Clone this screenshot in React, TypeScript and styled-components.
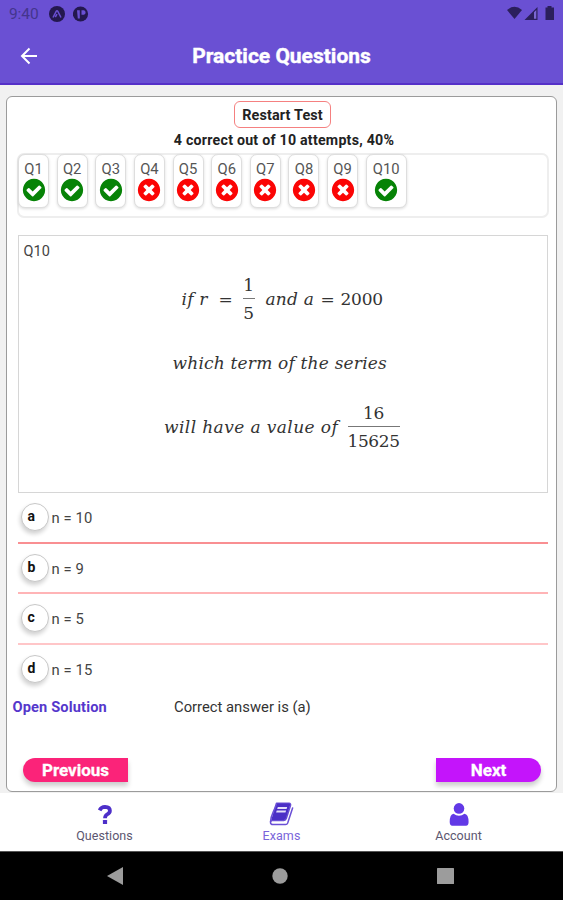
import React from "react";
import styled, { createGlobalStyle } from "styled-components";

const GlobalStyle = createGlobalStyle`
  * { box-sizing: border-box; }
  body { margin: 0; background: #f0f0f0; }
  button { border: 0; padding: 0; background: none; font: inherit; }
`;

const Screen = styled.div`
  width: 563px;
  height: 900px;
  display: flex;
  flex-direction: column;
  overflow: hidden;
  background: #f1f1f1;
  font-family: Roboto, sans-serif;
  color: #333;
  white-space: nowrap;
`;

const Header = styled.header`
  height: 85px;
  flex: none;
  background: #6a50d3;
  border-bottom: 2px solid #5530c8;
`;

const StatusBar = styled.div`
  height: 27px;
  display: flex;
  align-items: center;
  justify-content: space-between;
  padding: 0 8px 0 9px;
`;

const StatusGroup = styled.div`
  display: flex;
  align-items: center;
  gap: 8px;
`;

const Clock = styled.span`
  width: 32px;
  font-size: 15.5px;
  letter-spacing: -0.1px;
  color: #44358d;
`;

const TitleBar = styled.div`
  height: 58px;
  display: grid;
  grid-template-columns: 60px 1fr 60px;
  align-items: center;
`;

const BackButton = styled.button`
  display: flex;
  padding-left: 20px;
`;

const Title = styled.h1`
  margin: 0;
  text-align: center;
  font-size: 21px;
  line-height: 24px;
  font-weight: 700;
  color: #fff;
  -webkit-text-stroke: 0.4px #fff;
`;

const Card = styled.main`
  width: 551px;
  height: 696px;
  flex: none;
  margin: 11px 0 0 6px;
  border: 1.5px solid #9b9b9b;
  border-radius: 6px;
  background: #fff;
  display: flex;
  flex-direction: column;
`;

const Summary = styled.section`
  height: 56px;
  display: flex;
  flex-direction: column;
  align-items: center;
  padding-top: 4px;
`;

const RestartButton = styled.button`
  width: 97px;
  height: 27px;
  margin-left: 2px;
  border: 1.5px solid #f58080;
  border-radius: 6px;
  font-size: 14.4px;
  font-weight: 700;
  line-height: 27px;
  letter-spacing: 0.15px;
  color: #222;
`;

const Score = styled.p`
  margin: 4px 0 0 5px;
  font-size: 14.2px;
  line-height: 17px;
  font-weight: 700;
  letter-spacing: 0.24px;
  color: #222;
`;

const Strip = styled.div`
  width: 532px;
  height: 65px;
  margin-left: 10px;
  border: 2px solid #eee;
  border-radius: 7px;
  display: flex;
  align-items: flex-start;
  gap: 7.65px;
`;

const Chip = styled.div<{ $wide?: boolean }>`
  width: ${(p) => (p.$wide ? 41 : 31)}px;
  height: 54px;
  flex: none;
  margin-top: -1px;
  padding-top: 5.5px;
  border: 1.5px solid #dedede;
  border-radius: 7px;
  background: #fff;
  box-shadow: 0 1px 3px rgba(0, 0, 0, 0.14);
  display: flex;
  flex-direction: column;
  align-items: center;
  font-size: 14.8px;
  line-height: 16px;
  color: #555;

  &:first-child {
    margin-left: -1px;
  }
`;

const QuestionBox = styled.section`
  width: 530px;
  height: 258px;
  margin: 17px 0 0 10.5px;
  border: 1.5px solid #d6d6d6;
  display: flex;
  flex-direction: column;
`;

const QuestionLabel = styled.div`
  height: 31px;
  padding: 7px 0 0 5px;
  font-size: 14.5px;
  line-height: 17px;
  color: #444;
`;

const Formula = styled.div<{ $left: number }>`
  height: 64px;
  padding-left: ${(p) => p.$left}px;
  display: flex;
  align-items: center;
  font-family: "DejaVu Serif", serif;
  font-size: 17px;
  line-height: 20px;
  color: #333;
`;

const Words = styled.span<{ $width: number; $spacing?: number }>`
  width: ${(p) => p.$width}px;
  font-style: italic;
  letter-spacing: ${(p) => p.$spacing ?? 0.2}px;
`;

const Upright = styled.span<{ $width: number }>`
  width: ${(p) => p.$width}px;
  letter-spacing: -0.2px;
`;

const Fraction = styled.span<{ $width: number; $after?: number }>`
  width: ${(p) => p.$width}px;
  margin-right: ${(p) => p.$after ?? 0}px;
  display: flex;
  flex-direction: column;
  text-align: center;
  letter-spacing: -0.4px;
`;

const Numerator = styled.span`
  height: 24px;
  border-bottom: 1.5px solid #777;
`;

const Denominator = styled.span`
  height: 24px;
  padding-top: 4px;
`;

const Options = styled.ul`
  width: 530px;
  margin: 0 0 0 10.5px;
  padding: 0;
  list-style: none;
`;

const Option = styled.li<{ $rule: string }>`
  height: 50.7px;
  display: flex;
  align-items: center;
  gap: 3px;
  padding-left: 3px;
  border-bottom: 2px solid ${(p) => p.$rule};
  font-size: 14.8px;
  color: #444;
`;

const OptionKey = styled.span`
  width: 28px;
  height: 28px;
  margin-top: -1px;
  border: 1.5px solid #c8c8c8;
  border-radius: 50%;
  background: #fff;
  box-shadow: -1px 3px 4px rgba(0, 0, 0, 0.18);
  padding-left: 6px;
  font-size: 14px;
  line-height: 25px;
  font-weight: 700;
  color: #111;
`;

const OptionText = styled.span`
  padding-top: 1px;
  letter-spacing: 0.1px;
`;

const SolutionRow = styled.div`
  height: 30px;
  display: grid;
  grid-template-columns: 161.5px 1fr;
  align-items: center;
  margin-top: -4px;
  padding-left: 5.5px;
  font-size: 14.8px;
`;

const SolutionLink = styled.a`
  font-weight: 700;
  font-size: 14.6px;
  letter-spacing: 0.15px;
  color: #5537cc;
`;

const Pager = styled.div`
  display: flex;
  justify-content: space-between;
  margin-top: 36px;
  padding: 0 15px 0 16px;
`;

const PagerButton = styled.button<{ $side: "left" | "right" }>`
  width: 105px;
  height: 24px;
  border-radius: ${(p) => (p.$side === "left" ? "12px 0 0 12px" : "0 12px 12px 0")};
  background: ${(p) => (p.$side === "left" ? "#fb2379" : "#c414fb")};
  box-shadow: 0 4px 5px rgba(0, 0, 0, 0.2);
  color: #fff;
  font-size: 17px;
  line-height: 25px;
  font-weight: 700;
  -webkit-text-stroke: 0.3px #fff;
`;

const TabBar = styled.nav`
  height: 58px;
  margin-top: 1px;
  flex: none;
  padding: 0 16px;
  display: grid;
  grid-template-columns: repeat(3, 1fr);
  background: #fff;
`;

const Tab = styled.a<{ $active?: boolean }>`
  display: flex;
  flex-direction: column;
  align-items: center;
  padding-top: 8px;
  font-size: 12.5px;
  line-height: 16px;
  letter-spacing: 0.05px;
  color: ${(p) => (p.$active ? "#7a64da" : "#5c5670")};
`;

const SystemBar = styled.div`
  height: 49px;
  flex: none;
  padding: 0 29px 0 28px;
  display: grid;
  grid-template-columns: 175px 1fr 177px;
  place-items: center;
  background: #000;
  border-top: 1px solid #555;
`;

const circle =
  "q0 209-103 385.5t-279.5 279.5-385.5 103-385.5-103-279.5-279.5-103-385.5 103-385.5 279.5-279.5 385.5-103 385.5 103 279.5 279.5 103 385.5z";

const check =
  "M1412 734q0-28-18-46l-91-90q-19-19-45-19t-45 19l-408 407-226-226q-19-19-45-19t-45 19l-91 90q-18 18-18 46 0 27 18 45l362 362q19 19 45 19 27 0 46-19l543-543q18-18 18-45zm252 162" +
  circle;

const cross =
  "M1277 1122q0-26-19-45l-181-181 181-181q19-19 19-45 0-27-19-46l-90-90q-19-19-46-19-26 0-45 19l-181 181-181-181q-19-19-45-19-27 0-46 19l-90 90q-19 19-19 46 0 26 19 45l181 181-181 181q-19 19-19 45 0 27 19 46l90 90q19 19 46 19 26 0 45-19l181-181 181 181q19 19 45 19 27 0 46-19l90-90q19-19 19-46zm387-226" +
  circle;

function ResultIcon({ ok }: { ok: boolean }) {
  return (
    <svg width="26" height="26" viewBox="0 0 1792 1792" fill={ok ? "#078307" : "#fb0505"}>
      <path d={ok ? check : cross} />
    </svg>
  );
}

function QuestionIcon() {
  return (
    <svg width="27" height="27" viewBox="0 0 27 27">
      <path
        d="M8.600 9.300Q10.200 6 14 5.900q5 .2 4.900 3.900 0 2.300-2.700 3.600-2.100 1.100-2.200 3.900"
        fill="none"
        stroke="#4d2fc9"
        strokeWidth="3.800"
      />
      <rect x="11.900" y="18.900" width="4.200" height="4" rx="0.500" fill="#4d2fc9" />
    </svg>
  );
}

function BookIcon() {
  return (
    <svg width="27" height="27" viewBox="0 0 27 27">
      <path
        d="M8.500 2.200H21q2 .2 1.500 2.300L18.300 17.500q-.6 1.800-2.500 1.900H4q-1.500.2-1.500 1.800 0 2.400 2.500 2.400h12.500q1.600-.1 2.200-1.700L24.600 7"
        fill="none"
        stroke="#6a4fd6"
        strokeWidth="1.500"
        strokeLinecap="round"
      />
      <path d="M8.500 2.500H21q1.500.2 1.100 1.800L18 17.200q-.5 1.600-2 1.700H3.200L7 6z" fill="#4b2fc6" />
      <path d="M9.800 6h9.400l-.6 1.900H9.200zM8.700 9.600h9.400l-.6 1.900H8.100z" fill="#e4dff9" />
      <path d="M2.500 21Q3 15.500 5 11.500T8.500 2.500" fill="none" stroke="#6a4fd6" strokeWidth="1.600" />
    </svg>
  );
}

function UserIcon() {
  return (
    <svg width="27" height="27" viewBox="0 0 27 27" fill="#6239e6">
      <circle cx="14" cy="7.400" r="5.300" />
      <path d="M8.600 12.700Q11 14.800 14 14.800t5.400-2.100q4.200.6 4.200 8.300 0 3.400-2.600 3.800H7.300Q4.700 24.500 4.700 21q0-7.700 3.900-8.300z" />
    </svg>
  );
}

const results = [true, true, true, false, false, false, false, false, false, true];

const options = [
  { key: "a", text: "n = 10", rule: "#f98f92" },
  { key: "b", text: "n = 9", rule: "#ffb4b6" },
  { key: "c", text: "n = 5", rule: "#ffc6c8" },
  { key: "d", text: "n = 15", rule: "transparent" },
];

export default function App() {
  return (
    <Screen>
      <GlobalStyle />
      <Header>
        <StatusBar>
          <StatusGroup>
            <Clock>9:40</Clock>
            <svg width="16" height="16" viewBox="0 0 16 16">
              <circle cx="8" cy="8" r="8" fill="#24184f" />
              <path d="M4 11.500 7.300 5.200q.7-1 1.400 0l3.300 6.300M8 8.200 6.300 11" fill="none" stroke="#6a50d3" strokeWidth="1.500" />
            </svg>
            <svg width="16" height="16" viewBox="0 0 16 16">
              <circle cx="7.500" cy="8" r="7.600" fill="#24184f" />
              <path d="M4 4.200h2.800v8.200H4.800zM8.500 4.200h2.400q1.700.3 1.700 2.200T10.900 8.800H8.500z" fill="#6a50d3" />
            </svg>
          </StatusGroup>
          <svg width="48" height="15" viewBox="0 0 48 15" fill="#2b1f5c">
            <path d="M0 4Q7.500-2.500 15 4L7.500 13z" />
            <path d="M30.500 1v13H17.500z" />
            <path d="M27 6.200 29.300 4v8.800H27z" fill="#7b67d3" />
            <path d="M40.500 0h4v1.500H47V14h-8.500V1.500h2z" />
          </svg>
        </StatusBar>
        <TitleBar>
          <BackButton aria-label="Back">
            <svg width="18" height="18" viewBox="0 0 18 18" fill="none" stroke="#fff" strokeWidth="2">
              <path d="M17 9H2M9.500 1.500 2 9l7.500 7.500" />
            </svg>
          </BackButton>
          <Title>Practice Questions</Title>
        </TitleBar>
      </Header>

      <Card>
        <Summary>
          <RestartButton>Restart Test</RestartButton>
          <Score>4 correct out of 10 attempts, 40%</Score>
        </Summary>
        <Strip>
          {results.map((ok, i) => (
            <Chip key={i} $wide={i === 9}>
              <span>Q{i + 1}</span>
              <ResultIcon ok={ok} />
            </Chip>
          ))}
        </Strip>

        <QuestionBox>
          <QuestionLabel>Q10</QuestionLabel>
          <Formula $left={163}>
            <Words $width={37}>if r</Words>
            <Upright $width={24}>=</Upright>
            <Fraction $width={12} $after={11}>
              <Numerator>1</Numerator>
              <Denominator>5</Denominator>
            </Fraction>
            <Words $width={55}>and a</Words>
            <Upright $width={20}>=</Upright>
            <Upright $width={44}>2000</Upright>
          </Formula>
          <Formula $left={154}>
            <Words $width={220}>which term of the series</Words>
          </Formula>
          <Formula $left={145.5}>
            <Words $width={183.5} $spacing={0.4}>
              will have a value of
            </Words>
            <Fraction $width={52}>
              <Numerator>16</Numerator>
              <Denominator>15625</Denominator>
            </Fraction>
          </Formula>
        </QuestionBox>

        <Options>
          {options.map((o) => (
            <Option key={o.key} $rule={o.rule}>
              <OptionKey>{o.key}</OptionKey>
              <OptionText>{o.text}</OptionText>
            </Option>
          ))}
        </Options>

        <SolutionRow>
          <SolutionLink>Open Solution</SolutionLink>
          <span>Correct answer is (a)</span>
        </SolutionRow>

        <Pager>
          <PagerButton $side="left">Previous</PagerButton>
          <PagerButton $side="right">Next</PagerButton>
        </Pager>
      </Card>

      <TabBar>
        <Tab>
          <QuestionIcon />
          Questions
        </Tab>
        <Tab $active>
          <BookIcon />
          Exams
        </Tab>
        <Tab>
          <UserIcon />
          Account
        </Tab>
      </TabBar>

      <SystemBar>
        <svg width="17" height="18" viewBox="0 0 17 18">
          <path d="M0 9 16 0v18z" fill="#9c9c9c" />
        </svg>
        <svg width="16" height="16" viewBox="0 0 16 16">
          <circle cx="8" cy="8" r="7.700" fill="#9c9c9c" />
        </svg>
        <svg width="17" height="16" viewBox="0 0 17 16">
          <rect width="17" height="16" rx="0.500" fill="#9c9c9c" />
        </svg>
      </SystemBar>
    </Screen>
  );
}
